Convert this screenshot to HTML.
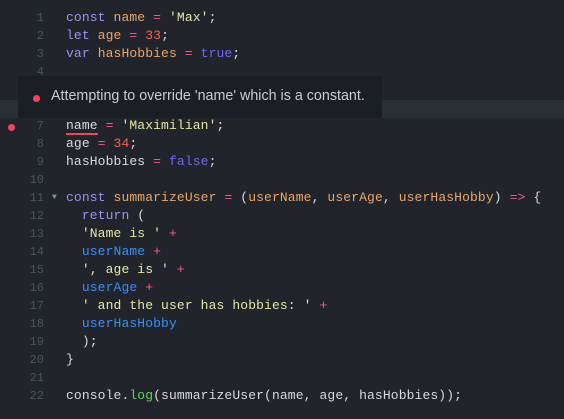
<!DOCTYPE html>
<html><head><meta charset="utf-8"><style>
html,body{margin:0;padding:0;}
body{width:564px;height:419px;background:#21252b;position:relative;overflow:hidden;font-family:"Liberation Mono",monospace;font-size:13px;color:#d7dae0;}
.hl{position:absolute;left:0;top:100px;width:564px;height:18px;background:#2a2f37;}
.ln{position:absolute;left:0;width:44px;text-align:right;color:#4b5260;font-size:12px;line-height:18px;}
.code{position:absolute;left:66px;white-space:pre;letter-spacing:0.12px;line-height:18px;}
.k{color:#a28ef0}.v{color:#e8a66e}.o{color:#f2569a}.s{color:#e6e6a8}.n{color:#f0614f}.b{color:#7565f2}.u{color:#3e8ef0}.g{color:#5dd160}
.tip{position:absolute;left:18px;top:76px;width:364px;height:42px;background:#1b1f24;border-radius:2px;}
.tip span{position:absolute;left:33px;top:12px;font-family:"Liberation Sans",sans-serif;font-size:14.3px;color:#c9ccd2;}
.dot{position:absolute;width:7px;height:7px;border-radius:50%;background:#f0455e;}
.ul{border-bottom:2px solid #f0455e;}
</style></head><body>
<div class="hl"></div>
<div class="ln" style="top:9px">1</div><div class="code" style="top:9px"><span class="k">const</span> <span class="v">name</span> <span class="o">=</span> <span class="s">'Max'</span>;</div>
<div class="ln" style="top:27px">2</div><div class="code" style="top:27px"><span class="k">let</span> <span class="v">age</span> <span class="o">=</span> <span class="n">33</span>;</div>
<div class="ln" style="top:45px">3</div><div class="code" style="top:45px"><span class="k">var</span> <span class="v">hasHobbies</span> <span class="o">=</span> <span class="b">true</span>;</div>
<div class="ln" style="top:63px">4</div>
<div class="dot" style="left:8px;top:124px"></div>
<div class="ln" style="top:117px">7</div><div class="code" style="top:117px"><span class="ul">name</span> <span class="o">=</span> <span class="s">'Maximilian'</span>;</div>
<div class="ln" style="top:135px">8</div><div class="code" style="top:135px">age <span class="o">=</span> <span class="n">34</span>;</div>
<div class="ln" style="top:153px">9</div><div class="code" style="top:153px">hasHobbies <span class="o">=</span> <span class="b">false</span>;</div>
<div class="ln" style="top:171px">10</div>
<div class="ln" style="top:189px">11</div><div style="position:absolute;left:52px;top:189px;color:#8a8f98;font-size:8px;line-height:18px">▼</div><div class="code" style="top:189px"><span class="k">const</span> <span class="v">summarizeUser</span> <span class="o">=</span> (<span class="v">userName</span>, <span class="v">userAge</span>, <span class="v">userHasHobby</span>) <span class="o">=&gt;</span> {</div>
<div class="ln" style="top:207px">12</div><div class="code" style="top:207px">  <span class="k">return</span> (</div>
<div class="ln" style="top:225px">13</div><div class="code" style="top:225px">  <span class="s">'Name is '</span> <span class="o">+</span></div>
<div class="ln" style="top:243px">14</div><div class="code" style="top:243px">  <span class="u">userName</span> <span class="o">+</span></div>
<div class="ln" style="top:261px">15</div><div class="code" style="top:261px">  <span class="s">', age is '</span> <span class="o">+</span></div>
<div class="ln" style="top:279px">16</div><div class="code" style="top:279px">  <span class="u">userAge</span> <span class="o">+</span></div>
<div class="ln" style="top:297px">17</div><div class="code" style="top:297px">  <span class="s">' and the user has hobbies: '</span> <span class="o">+</span></div>
<div class="ln" style="top:315px">18</div><div class="code" style="top:315px">  <span class="u">userHasHobby</span></div>
<div class="ln" style="top:333px">19</div><div class="code" style="top:333px">  );</div>
<div class="ln" style="top:351px">20</div><div class="code" style="top:351px">}</div>
<div class="ln" style="top:369px">21</div>
<div class="ln" style="top:387px">22</div><div class="code" style="top:387px">console.<span class="g">log</span>(summarizeUser(name, age, hasHobbies));</div>
<div class="tip"><div class="dot" style="left:15px;top:19px"></div><span>Attempting to override 'name' which is a constant.</span></div>
</body></html>
